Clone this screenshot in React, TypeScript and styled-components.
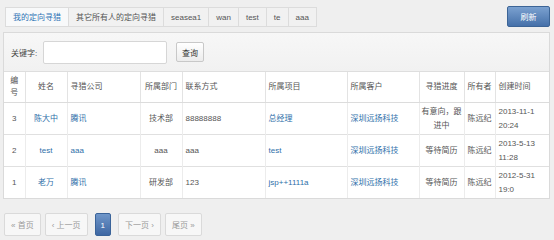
import React from "react";
import styled, { createGlobalStyle } from "styled-components";

const Global = createGlobalStyle`
  html, body { margin: 0; padding: 0; }
  body {
    background: #efefef;
    font-family: "Liberation Sans", "Noto Sans CJK SC", sans-serif;
    font-size: 8px;
    color: #555;
  }
`;

const Page = styled.div`
  width: 554px;
  height: 240px;
  overflow: hidden;
  display: flex;
  flex-direction: column;
`;

const TopBar = styled.div`
  display: flex;
  align-items: flex-start;
  justify-content: space-between;
  padding: 6px 4px 0 5px;
  height: 27px;
  box-sizing: border-box;
`;

const Tabs = styled.div`
  display: flex;
  margin-top: 1px;
`;

const Tab = styled.div<{ $active?: boolean }>`
  height: 20px;
  line-height: 20px;
  padding: 0 7px;
  box-sizing: border-box;
  border: 1px solid #dcdcdc;
  margin-left: -1px;
  background: ${(p) => (p.$active ? "#f8f9fa" : "#f1f1f1")};
  color: ${(p) => (p.$active ? "#2f73b5" : "#555")};
  white-space: nowrap;
  &:first-child { margin-left: 0; }
`;

const RefreshButton = styled.button`
  width: 43px;
  height: 21px;
  border: 1px solid #3c6496;
  border-radius: 2px;
  background: linear-gradient(#7ba1d0, #4570a9);
  color: #fff;
  font: inherit;
  padding: 0;
`;

const Panel = styled.div`
  margin: 5px 4px 0 3px;
  border: 1px solid #dadada;
  background: #fff;
`;

const SearchBar = styled.div`
  display: flex;
  align-items: center;
  height: 39px;
  padding-left: 7px;
  background: linear-gradient(#f7f7f7, #f1f1f1);
  border-bottom: 1px solid #dedede;
  box-sizing: border-box;
`;

const Label = styled.span`
  width: 32px;
  color: #444;
`;

const Input = styled.input`
  width: 124px;
  height: 23px;
  box-sizing: border-box;
  border: 1px solid #d6d6d6;
  border-radius: 2px;
  background: #fff;
  margin: 0 9px 0 0;
`;

const SmallButton = styled.button`
  height: 20px;
  width: 28px;
  padding: 0;
  border: 1px solid #c8c8c8;
  border-radius: 2px;
  background: linear-gradient(#ffffff, #ececec);
  font: inherit;
  color: #333;
`;

const Table = styled.table`
  width: 545px;
  table-layout: fixed;
  border-collapse: collapse;
`;

const Th = styled.th<{ $align?: string }>`
  font-weight: normal;
  color: #555;
  text-align: ${(p) => p.$align || "left"};
  padding: 2px 2px;
  height: 26px;
  line-height: 12.5px;
  border-left: 1px solid #e3e3e3;
  border-bottom: 1px solid #dcdcdc;
  vertical-align: middle;
  &:first-child { border-left: none; }
`;

const Td = styled.td<{ $align?: string; $link?: boolean }>`
  text-align: ${(p) => p.$align || "left"};
  color: ${(p) => (p.$link ? "#2f6fa9" : "#555")};
  padding: 2px 2px;
  height: 27px;
  line-height: 13.5px;
  border-left: 1px solid #ececec;
  border-top: 1px solid #e0e0e0;
  vertical-align: middle;
  &:first-child { border-left: none; }
`;

const Pager = styled.div`
  display: flex;
  align-items: center;
  gap: 4px;
  padding: 14px 0 0 4px;
`;

const PageBtn = styled.div<{ $active?: boolean }>`
  height: 23px;
  line-height: 23px;
  box-sizing: border-box;
  padding: 0 ${(p) => (p.$active ? "5px" : "6px")};
  margin: 0 ${(p) => (p.$active ? "3px" : "0")};
  border: 1px solid ${(p) => (p.$active ? "#3a6399" : "#dadada")};
  border-radius: 2px;
  background: ${(p) => (p.$active ? "linear-gradient(#6f96c9, #3e67a3)" : "#f7f7f7")};
  color: ${(p) => (p.$active ? "#fff" : "#999")};
  white-space: nowrap;
`;

type Col = { title: string; w: number; align: string; pad: number };
const cols: Col[] = [
  { title: "编号", w: 21, align: "center", pad: 3 },
  { title: "姓名", w: 42, align: "center", pad: 3 },
  { title: "寻猎公司", w: 73, align: "left", pad: 3 },
  { title: "所属部门", w: 42, align: "center", pad: 3 },
  { title: "联系方式", w: 83, align: "left", pad: 3 },
  { title: "所属项目", w: 82, align: "left", pad: 3 },
  { title: "所属客户", w: 72, align: "left", pad: 3 },
  { title: "寻猎进度", w: 45, align: "center", pad: 2 },
  { title: "所有者", w: 31, align: "center", pad: 2 },
  { title: "创建时间", w: 54, align: "left", pad: 3 },
];

const links = [false, true, true, false, false, true, true, false, false, false];

const rows: string[][] = [
  ["3", "陈大中", "腾讯", "技术部", "88888888", "总经理", "深圳远扬科技", "有意向，跟进中", "陈远纪", "2013-11-1 20:24"],
  ["2", "test", "aaa", "aaa", "aaa", "test", "深圳远扬科技", "等待简历", "陈远纪", "2013-5-13 11:28"],
  ["1", "老万", "腾讯", "研发部", "123", "jsp++1111a", "深圳远扬科技", "等待简历", "陈远纪", "2012-5-31 19:0"],
];

export default function App() {
  return (
    <Page>
      <Global />
      <TopBar>
        <Tabs>
          <Tab $active>我的定向寻猎</Tab>
          <Tab>其它所有人的定向寻猎</Tab>
          <Tab>seasea1</Tab>
          <Tab>wan</Tab>
          <Tab>test</Tab>
          <Tab>te</Tab>
          <Tab>aaa</Tab>
        </Tabs>
        <RefreshButton>刷新</RefreshButton>
      </TopBar>
      <Panel>
        <SearchBar>
          <Label>关键字:</Label>
          <Input />
          <SmallButton>查询</SmallButton>
        </SearchBar>
        <Table>
          <colgroup>
            {cols.map((c, i) => (
              <col key={i} style={{ width: c.w }} />
            ))}
          </colgroup>
          <thead>
            <tr>
              {cols.map((c, i) => (
                <Th key={i} $align={c.align} style={{ paddingLeft: c.pad, paddingRight: c.pad }}>
                  {c.title}
                </Th>
              ))}
            </tr>
          </thead>
          <tbody>
            {rows.map((r, ri) => (
              <tr key={ri}>
                {r.map((v, ci) => (
                  <Td
                    key={ci}
                    $align={cols[ci].align}
                    $link={links[ci]}
                    style={{ paddingLeft: cols[ci].pad, paddingRight: cols[ci].pad }}
                  >
                    {v}
                  </Td>
                ))}
              </tr>
            ))}
          </tbody>
        </Table>
      </Panel>
      <Pager>
        <PageBtn>« 首页</PageBtn>
        <PageBtn>‹ 上一页</PageBtn>
        <PageBtn $active>1</PageBtn>
        <PageBtn>下一页 ›</PageBtn>
        <PageBtn>尾页 »</PageBtn>
      </Pager>
    </Page>
  );
}
